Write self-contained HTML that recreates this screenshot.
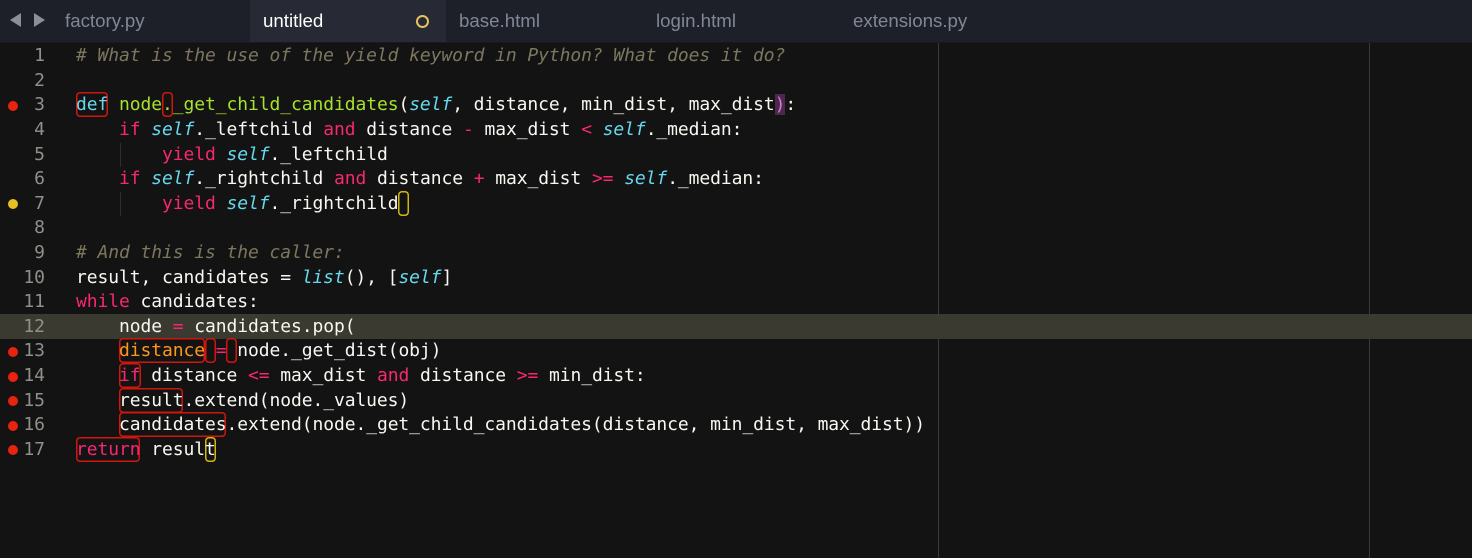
<!DOCTYPE html>
<html><head><meta charset="utf-8"><style>
*{margin:0;padding:0;box-sizing:border-box}
body{width:1472px;height:558px;background:#131313;overflow:hidden;position:relative;font-family:"DejaVu Sans Mono","Liberation Mono",monospace}
#tabs{position:absolute;left:0;top:0;width:1472px;height:43px;background:#1e2029;border-bottom:1px solid #18191f}
.tab{position:absolute;top:0;height:42px;line-height:42px;font-family:"Liberation Sans",sans-serif;font-size:18.7px;color:#7f8796}
.act{background:#272a35;color:#fff}
.arr{position:absolute;top:13px;width:0;height:0;border-top:7px solid transparent;border-bottom:7px solid transparent}
.ln{position:absolute;left:0;width:1472px;height:24.6px;line-height:24.6px;font-size:18px;letter-spacing:-0.09px;color:#f8f8f2;white-space:pre}
.num{position:absolute;left:0;width:45px;text-align:right;color:#8f908a;letter-spacing:0}
.code{position:absolute;left:76px}
.dot{position:absolute;left:8px;top:7.5px;width:10px;height:10px;border-radius:50%;background:#e8230f}
.c{color:#7d7760;font-style:italic}
.k{color:#f92672}.d{color:#66d9ef}.f{color:#a6e22e}.s{color:#66d9ef;font-style:italic}.o{color:#fd971f}
.b{box-shadow:inset 0 0 0 1.5px #d0160e;border-radius:4px;padding:2px 0}
.y{box-shadow:inset 0 0 0 1.5px #d5b60f;border-radius:4px;padding:2px 0}
.vl{position:absolute;top:43px;width:1px;height:515px;background:#3a3a3a}
.g{position:absolute;width:1px;background:#2e2e2e}
#ed{position:absolute;left:0;top:1.5px;width:1472px;height:556px}
</style></head><body>
<div id="tabs">
<div class="arr" style="left:10px;border-right:11px solid #8a8f99"></div>
<div class="arr" style="left:34px;border-left:11px solid #8a8f99"></div>
<div class="tab" style="left:65px">factory.py</div>
<div class="tab act" style="left:250px;width:196px;padding-left:13px">untitled<span style="position:absolute;left:166px;top:15px;width:13px;height:13px;border:2px solid #e5c25c;border-radius:50%"></span></div>
<div class="tab" style="left:459px">base.html</div>
<div class="tab" style="left:656px">login.html</div>
<div class="tab" style="left:853px">extensions.py</div>
</div>
<div class="vl" style="left:938px"></div>
<div class="vl" style="left:1369px"></div>
<div id="ed">
<div class="g" style="left:120px;top:141px;height:24px"></div>
<div class="g" style="left:120px;top:190px;height:24px"></div>
<div style="position:absolute;left:0;top:312px;width:1472px;height:25px;background:#3b3a30"></div>

<div class="ln" style="top:42.7px"><span class="num">1</span><span class="code c"># What is the use of the yield keyword in Python? What does it do?</span></div>
<div class="ln" style="top:67.3px"><span class="num">2</span></div>
<div class="ln" style="top:91.9px"><span class="dot"></span><span class="num">3</span><span class="code"><span class="d b">def</span> <span class="f">node<span class="b">.</span>_get_child_candidates</span>(<span class="s">self</span>, distance, min_dist, max_dist<span style="background:#4a2a4a;color:#e070e0">)</span>:</span></div>
<div class="ln" style="top:116.5px"><span class="num">4</span><span class="code">    <span class="k">if</span> <span class="s">self</span>._leftchild <span class="k">and</span> distance <span class="k">-</span> max_dist <span class="k">&lt;</span> <span class="s">self</span>._median:</span></div>
<div class="ln" style="top:141.1px"><span class="num">5</span><span class="code">        <span class="k">yield</span> <span class="s">self</span>._leftchild</span></div>
<div class="ln" style="top:165.7px"><span class="num">6</span><span class="code">    <span class="k">if</span> <span class="s">self</span>._rightchild <span class="k">and</span> distance <span class="k">+</span> max_dist <span class="k">&gt;=</span> <span class="s">self</span>._median:</span></div>
<div class="ln" style="top:190.3px"><span class="dot" style="background:#e5c020"></span><span class="num">7</span><span class="code">        <span class="k">yield</span> <span class="s">self</span>._rightchild<span class="y"> </span></span></div>
<div class="ln" style="top:214.9px"><span class="num">8</span></div>
<div class="ln" style="top:239.5px"><span class="num">9</span><span class="code c"># And this is the caller:</span></div>
<div class="ln" style="top:264.1px"><span class="num">10</span><span class="code">result, candidates = <span class="s">list</span>(), [<span class="s">self</span>]</span></div>
<div class="ln" style="top:288.7px"><span class="num">11</span><span class="code"><span class="k">while</span> candidates:</span></div>
<div class="ln" style="top:313.3px"><span class="num">12</span><span class="code">    node <span class="k">=</span> candidates.pop(</span></div>
<div class="ln" style="top:337.9px"><span class="dot"></span><span class="num">13</span><span class="code">    <span class="o b">distance</span><span class="b"> </span><span class="k">=</span><span class="b"> </span>node._get_dist(obj)</span></div>
<div class="ln" style="top:362.5px"><span class="dot"></span><span class="num">14</span><span class="code">    <span class="k b">if</span> distance <span class="k">&lt;=</span> max_dist <span class="k">and</span> distance <span class="k">&gt;=</span> min_dist:</span></div>
<div class="ln" style="top:387.1px"><span class="dot"></span><span class="num">15</span><span class="code">    <span class="b">result</span>.extend(node._values)</span></div>
<div class="ln" style="top:411.7px"><span class="dot"></span><span class="num">16</span><span class="code">    <span class="b">candidates</span>.extend(node._get_child_candidates(distance, min_dist, max_dist))</span></div>
<div class="ln" style="top:436.3px"><span class="dot"></span><span class="num">17</span><span class="code"><span class="k b">return</span> resul<span class="y">t</span></span></div>
</div>
</body></html>
